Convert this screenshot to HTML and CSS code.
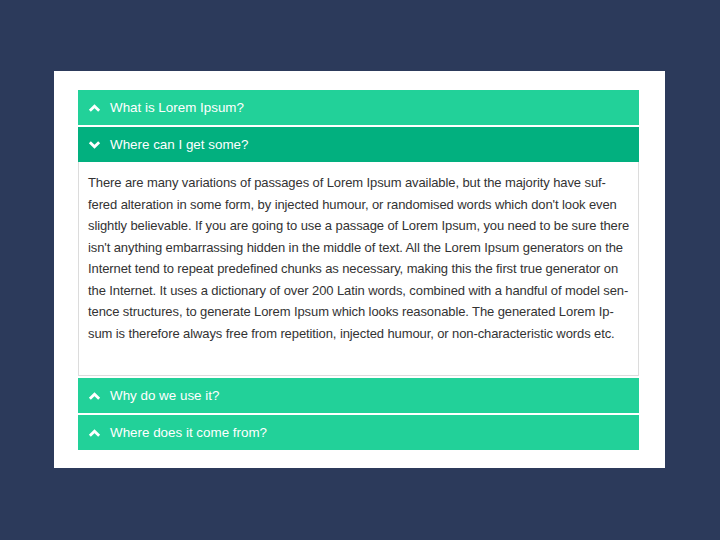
FILE: index.html
```html
<!DOCTYPE html>
<html lang="en">
<head>
<meta charset="utf-8">
<link rel="stylesheet" href="styles.css">
</head>
<body>
<div class="card">
  <div class="accordion">
    <div class="item">
      <div class="head"><svg class="chev" viewBox="0 0 14 10"><path d="M2 8 L7 3 L12 8" /></svg><span>What is Lorem Ipsum?</span></div>
    </div>
    <div class="item open">
      <div class="head active"><svg class="chev" viewBox="0 0 14 10"><path d="M2 2 L7 7 L12 2" /></svg><span>Where can I get some?</span></div>
      <div class="panel">
        <p>There are many variations of passages of Lorem Ipsum available, but the majority have suf&shy;fered alteration in some form, by injected humour, or randomised words which don't look even slightly believable. If you are going to use a passage of Lorem Ipsum, you need to be sure there isn't anything embarrassing hidden in the middle of text. All the Lorem Ipsum generators on the Internet tend to repeat predefined chunks as necessary, making this the first true generator on the Internet. It uses a dictionary of over 200 Latin words, combined with a handful of model sen&shy;tence structures, to generate Lorem Ipsum which looks reasonable. The generated Lorem Ip&shy;sum is therefore always free from repetition, injected humour, or non-characteristic words etc.</p>
      </div>
    </div>
    <div class="item">
      <div class="head"><svg class="chev" viewBox="0 0 14 10"><path d="M2 8 L7 3 L12 8" /></svg><span>Why do we use it?</span></div>
    </div>
    <div class="item">
      <div class="head"><svg class="chev" viewBox="0 0 14 10"><path d="M2 8 L7 3 L12 8" /></svg><span>Where does it come from?</span></div>
    </div>
  </div>
</div>
</body>
</html>
```
FILE: styles.css
```css
html, body {
  margin: 0;
  padding: 0;
}
body {
  background: #2c3a5b;
  width: 720px;
  height: 540px;
  font-family: "Liberation Sans", Arial, sans-serif;
  padding-top: 71px;
  box-sizing: border-box;
}
.card {
  background: #fff;
  width: 611px;
  margin-left: 54px;
  box-sizing: border-box;
  padding: 19px 26px 18px 24px;
}
.accordion {
  display: flex;
  flex-direction: column;
  gap: 2px;
}
.head {
  height: 35px;
  background: #22d199;
  color: #fff;
  font-size: 13.4px;
  display: flex;
  align-items: center;
  padding-left: 10px;
  gap: 9px;
}
.head.active {
  background: #02b07f;
}
.chev {
  width: 13px;
  height: 10px;
  fill: none;
  stroke: #fff;
  stroke-width: 3;
  stroke-linecap: butt;
  stroke-linejoin: miter;
}
.panel {
  border: 1px solid #dcdcdc;
  border-top: none;
  padding: 10px 8px 31px 9px;
}
.panel p {
  margin: 0;
  font-size: 13px;
  letter-spacing: -0.1px;
  line-height: 21.5px;
  color: #333;
  hyphens: manual;
}
```
